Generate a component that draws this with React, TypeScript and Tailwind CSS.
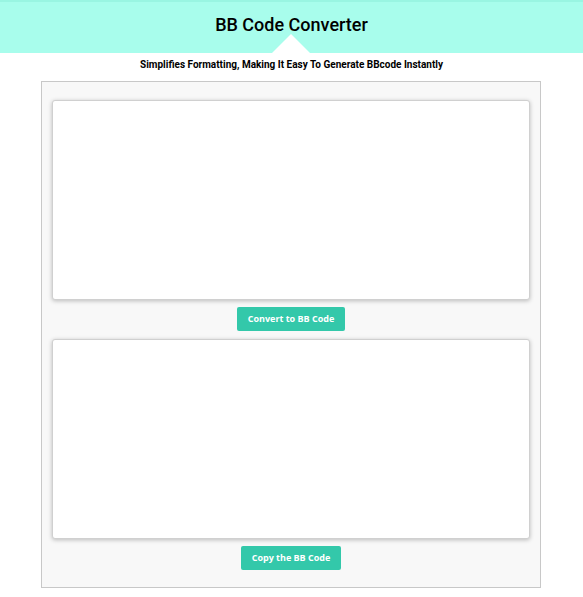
export default function App() {
  return (
    <div className="min-h-[597px] bg-white font-['Roboto',sans-serif]">
      <header className="relative h-[53px] border-t-2 border-[#99f5e2] bg-[#a8fdec]">
        <h1 className="pt-[11px] text-center text-[18px] font-medium leading-[24px] text-black">
          BB Code Converter
        </h1>
        <div className="absolute bottom-0 left-[272px] h-0 w-0 border-x-[19px] border-b-[19px] border-x-transparent border-b-white" />
      </header>
      <p className="mt-[5px] text-center text-[10px] font-bold leading-[13px] text-black">
        Simplifies Formatting, Making It Easy To Generate BBcode Instantly
      </p>
      <main className="ml-[41px] mt-[10px] flex w-[500px] flex-col items-center border border-[#c8c8c8] bg-[#f8f8f8] px-[10px] pb-[17px] pt-[18px]">
        <Panel />
        <Action label="Convert to BB Code" width="w-[108px]" />
        <div className="h-[8px]" />
        <Panel />
        <Action label="Copy the BB Code" width="w-[100px]" />
      </main>
    </div>
  );
}

function Panel() {
  return (
    <textarea className="block h-[200px] w-[478px] resize-none rounded-[3px] border border-[#d0d0d0] bg-white shadow-[0_1px_4px_rgba(0,0,0,0.25)] outline-none" />
  );
}

function Action({ label, width }: { label: string; width: string }) {
  return (
    <button
      className={`mt-[7px] h-[24px] ${width} rounded-[2px] bg-[#33c8aa] font-['Open_Sans',sans-serif] text-[9px] font-bold text-white`}
    >
      {label}
    </button>
  );
}
